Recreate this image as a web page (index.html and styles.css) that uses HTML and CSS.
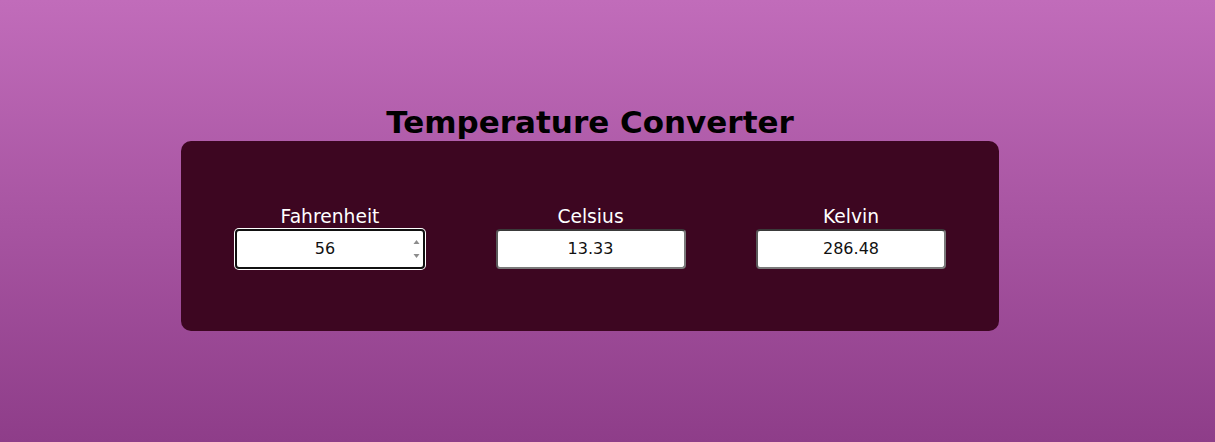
FILE: index.html
```html
<!DOCTYPE html>
<html lang="en">
<head>
<meta charset="utf-8">
<title>Temperature Converter</title>
<link rel="stylesheet" href="styles.css">
</head>
<body>
<main class="page">
  <h1 class="title">Temperature Converter</h1>
  <section class="card">
    <div class="field">
      <label class="label" for="f">Fahrenheit</label>
      <div class="input-wrap">
        <input class="input input-focus input-number" id="f" type="number" value="56">
        <span class="spinner" aria-hidden="true">
          <svg width="7" height="20" viewBox="0 0 7 20">
            <path d="M3.5 1 L6.5 5 L0.5 5 Z" fill="#8c8c8c"/>
            <path d="M0.5 15 L6.5 15 L3.5 19 Z" fill="#8c8c8c"/>
          </svg>
        </span>
      </div>
    </div>
    <div class="field">
      <label class="label" for="c">Celsius</label>
      <input class="input" id="c" type="text" value="13.33">
    </div>
    <div class="field">
      <label class="label" for="k">Kelvin</label>
      <input class="input" id="k" type="text" value="286.48">
    </div>
  </section>
</main>
</body>
</html>
```
FILE: styles.css
```css
html, body {
  margin: 0;
  padding: 0;
  height: 100%;
}
body {
  background: linear-gradient(180deg, #c16cba 0%, #8e3d89 100%);
  font-family: "DejaVu Sans", Verdana, sans-serif;
}
.page {
  width: 1180px;
  padding-top: 103px;
  display: flex;
  flex-direction: column;
  align-items: center;
}
.title {
  margin: 0;
  font-size: 31px;
  font-weight: bold;
  line-height: 38px;
  color: #000;
}
.card {
  box-sizing: border-box;
  width: 818px;
  height: 190px;
  background: #3d0621;
  border-radius: 10px;
  display: flex;
  justify-content: space-between;
  align-items: center;
  padding: 2px 53px 0 54px;
}
.field {
  display: flex;
  flex-direction: column;
  align-items: center;
}
.label {
  color: #fff;
  font-size: 18.7px;
  line-height: 22px;
  margin-bottom: 1px;
}
.input-wrap {
  position: relative;
  display: flex;
}
.input {
  box-sizing: border-box;
  width: 190px;
  height: 40px;
  border-radius: 4px;
  border: 2px solid #7a7a7a;
  border-top-color: #3a3a3a;
  border-left-color: #5a5a5a;
  background: #fff;
  font-family: "DejaVu Sans", Verdana, sans-serif;
  font-size: 16px;
  color: #111;
  text-align: center;
  padding: 0 6px;
  outline: none;
}
.input-number {
  padding: 0 20px 0 10px;
  -moz-appearance: textfield;
}
.input-number::-webkit-inner-spin-button,
.input-number::-webkit-outer-spin-button {
  -webkit-appearance: none;
  margin: 0;
}
.input-focus {
  border: 2px solid #111;
  box-shadow: 0 0 0 1px #fff;
}
.spinner {
  position: absolute;
  right: 5px;
  top: 10px;
  display: flex;
}
```
